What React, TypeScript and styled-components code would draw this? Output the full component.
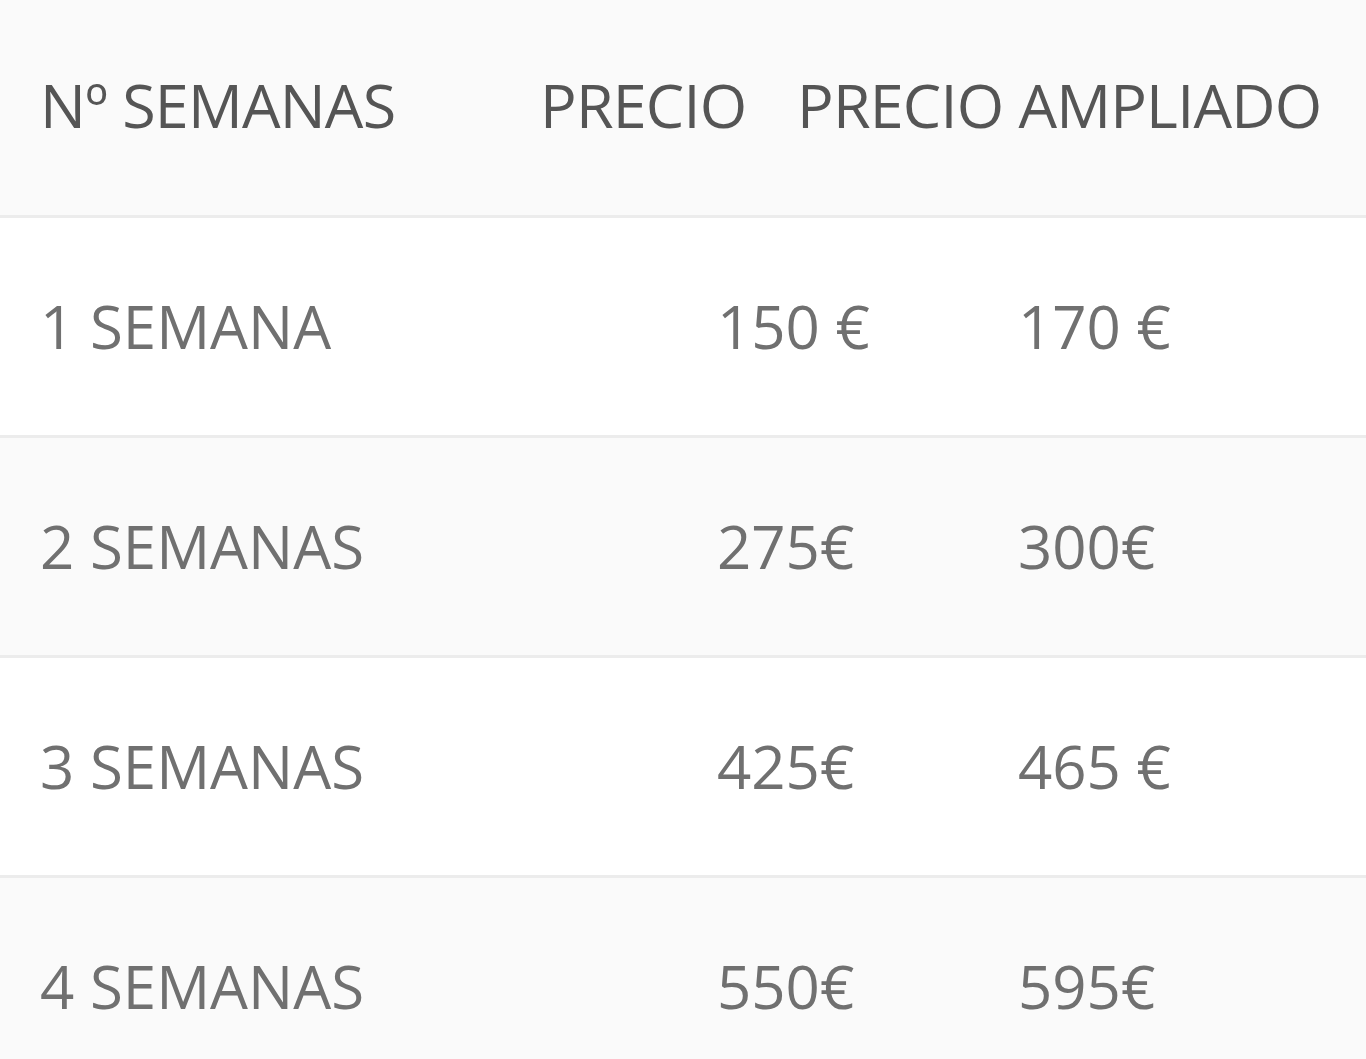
import React from "react";
import styled, { createGlobalStyle } from "styled-components";

const Global = createGlobalStyle`
  html, body { margin: 0; padding: 0; background: #ffffff; }
  body { font-family: "Open Sans", "Noto Sans", sans-serif; }
`;

const Table = styled.div`
  width: 1366px;
  height: 1059px;
  overflow: hidden;
  display: flex;
  flex-direction: column;
  background: #fafafa;
`;

const Row = styled.div<{ $head?: boolean; $alt?: boolean }>`
  flex: 0 0 auto;
  height: ${(p) => (p.$head ? "218px" : "220px")};
  box-sizing: border-box;
  display: grid;
  grid-template-columns: ${(p) => (p.$head ? "500px 257px 1fr" : "677px 301px 1fr")};
  align-items: center;
  padding: ${(p) => (p.$head ? "0 0 6px 40px" : "0 0 2px 40px")};
  background: ${(p) => (p.$head || p.$alt ? "#fafafa" : "#ffffff")};
  border-bottom: 3px solid #ececec;
`;

const Cell = styled.div<{ $head?: boolean }>`
  font-size: ${(p) => (p.$head ? "61px" : "60px")};
  font-weight: 400;
  color: ${(p) => (p.$head ? "#555555" : "#707070")};
  letter-spacing: ${(p) => (p.$head ? "-0.8px" : "0px")};
  white-space: nowrap;
  line-height: 1;
`;

const rows = [
  ["1 SEMANA", "150 €", "170 €"],
  ["2 SEMANAS", "275€", "300€"],
  ["3 SEMANAS", "425€", "465 €"],
  ["4 SEMANAS", "550€", "595€"],
];

export default function App() {
  return (
    <>
      <Global />
      <Table>
        <Row $head>
          <Cell $head>Nº SEMANAS</Cell>
          <Cell $head>PRECIO</Cell>
          <Cell $head>PRECIO AMPLIADO</Cell>
        </Row>
        {rows.map((r, i) => (
          <Row key={i} $alt={i % 2 === 1}>
            {r.map((c, j) => (
              <Cell key={j}>{c}</Cell>
            ))}
          </Row>
        ))}
      </Table>
    </>
  );
}
